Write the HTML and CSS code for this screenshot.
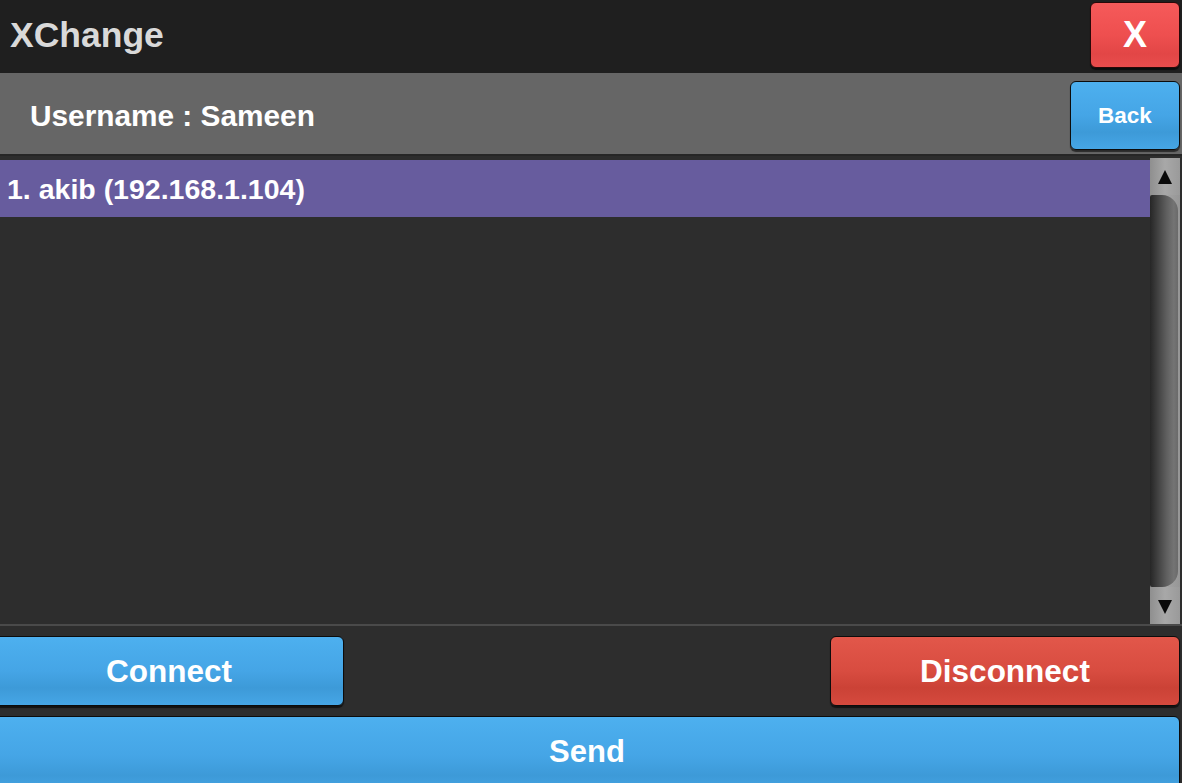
FILE: index.html
```html
<!DOCTYPE html>
<html>
<head>
<meta charset="utf-8">
<title>XChange</title>
<link rel="stylesheet" href="styles.css">
</head>
<body>
<div class="app">
  <header class="titlebar">
    <div class="title">XChange</div>
    <button class="btn btn-close">X</button>
  </header>
  <div class="userbar">
    <div class="username">Username : Sameen</div>
    <button class="btn btn-blue btn-back">Back</button>
  </div>
  <div class="listpanel">
    <div class="list">
      <div class="row selected">1. akib (192.168.1.104)</div>
    </div>
    <div class="scrollbar">
      <div class="arrow up"></div>
      <div class="track"><div class="thumb"></div></div>
      <div class="arrow down"></div>
    </div>
  </div>
  <div class="actions">
    <button class="btn btn-blue btn-connect">Connect</button>
    <button class="btn btn-red btn-disconnect">Disconnect</button>
  </div>
  <button class="btn btn-blue btn-send">Send</button>
</div>
</body>
</html>
```

FILE: styles.css
```css
* { box-sizing: border-box; }
html, body {
  margin: 0;
  padding: 0;
  width: 1182px;
  height: 783px;
  overflow: hidden;
  background: #2d2d2d;
  font-family: "Liberation Sans", Arial, sans-serif;
  font-weight: bold;
}
.app {
  display: flex;
  flex-direction: column;
  width: 1182px;
  height: 783px;
}
.btn {
  font-family: "Liberation Sans", Arial, sans-serif;
  font-weight: bold;
  color: #fff;
  border: 1px solid #0c0c0c;
  border-radius: 6px;
  padding: 0;
  cursor: pointer;
  box-shadow: 0 2px 1px rgba(0,0,0,0.6);
}
.btn-blue {
  background: linear-gradient(to bottom, #4db0ef 0%, #45a5e6 50%, #3d9ad8 75%, #46a6e6 100%);
}
.btn-red {
  background: linear-gradient(to bottom, #e2574a 0%, #d84c40 50%, #cb4236 75%, #d54a3e 100%);
}
.titlebar {
  height: 73px;
  flex: none;
  background: #1f1f1f;
  display: flex;
  justify-content: space-between;
  align-items: flex-start;
}
.title {
  color: #d9d9d9;
  font-size: 35.5px;
  line-height: 71px;
  padding-left: 10px;
}
.btn-close {
  width: 90px;
  height: 66px;
  margin-top: 2px;
  margin-right: 2px;
  font-size: 36px;
  background: linear-gradient(to bottom, #f65a5a 0%, #ee4f4f 50%, #e24646 80%, #ea4d4d 100%);
  border-color: #2a0808;
}
.userbar {
  height: 81px;
  flex: none;
  background: #666666;
  display: flex;
  justify-content: space-between;
  align-items: center;
}
.username {
  color: #fff;
  font-size: 29.8px;
  padding-left: 30px;
  padding-top: 5px;
}
.btn-back {
  width: 110px;
  height: 69px;
  margin-right: 2px;
  margin-top: 4px;
  font-size: 22.5px;
}
.listpanel {
  flex: none;
  height: 472px;
  display: flex;
  padding-top: 2px;
  border-top: 2px solid #262626;
  border-bottom: 2px solid #4a4a4a;
}
.list {
  flex: 1;
  padding-top: 2px;
}
.row {
  height: 57px;
  color: #fff;
  font-size: 28.5px;
  line-height: 59px;
  padding-left: 7px;
  white-space: nowrap;
}
.row.selected {
  background: #675c9e;
}
.scrollbar {
  width: 30px;
  margin-right: 2px;
  display: flex;
  flex-direction: column;
  background: #9b9b9b;
}
.arrow {
  height: 37px;
  flex: none;
  position: relative;
  background: linear-gradient(to right, #8f8f8f, #a8a8a8 50%, #9a9a9a);
}
.arrow::after {
  content: "";
  position: absolute;
  left: 8px;
  width: 0;
  height: 0;
  border-left: 7px solid transparent;
  border-right: 7px solid transparent;
}
.arrow.up::after {
  top: 12px;
  border-bottom: 14px solid #0a0a0a;
}
.arrow.down::after {
  bottom: 10px;
  border-top: 14px solid #0a0a0a;
}
.track {
  flex: 1;
  background: linear-gradient(to right, #8c8c8c, #a5a5a5 50%, #969696);
  display: flex;
}
.thumb {
  flex: 1;
  margin-right: 2px;
  border-radius: 2px 16px 16px 2px;
  background: linear-gradient(to right, #262626 0%, #3e3e3e 25%, #606060 60%, #747474 85%, #6a6a6a 100%);
}
.actions {
  flex: none;
  display: flex;
  justify-content: space-between;
  padding-top: 10px;
  height: 80px;
}
.btn-connect {
  width: 350px;
  height: 70px;
  margin-left: -6px;
  font-size: 31.5px;
}
.btn-disconnect {
  width: 350px;
  height: 70px;
  margin-right: 2px;
  font-size: 31.5px;
}
.btn-send {
  margin-top: 10px;
  margin-left: -6px;
  width: 1186px;
  height: 80px;
  flex: none;
  font-size: 31px;
  padding-bottom: 8px;
}
```
